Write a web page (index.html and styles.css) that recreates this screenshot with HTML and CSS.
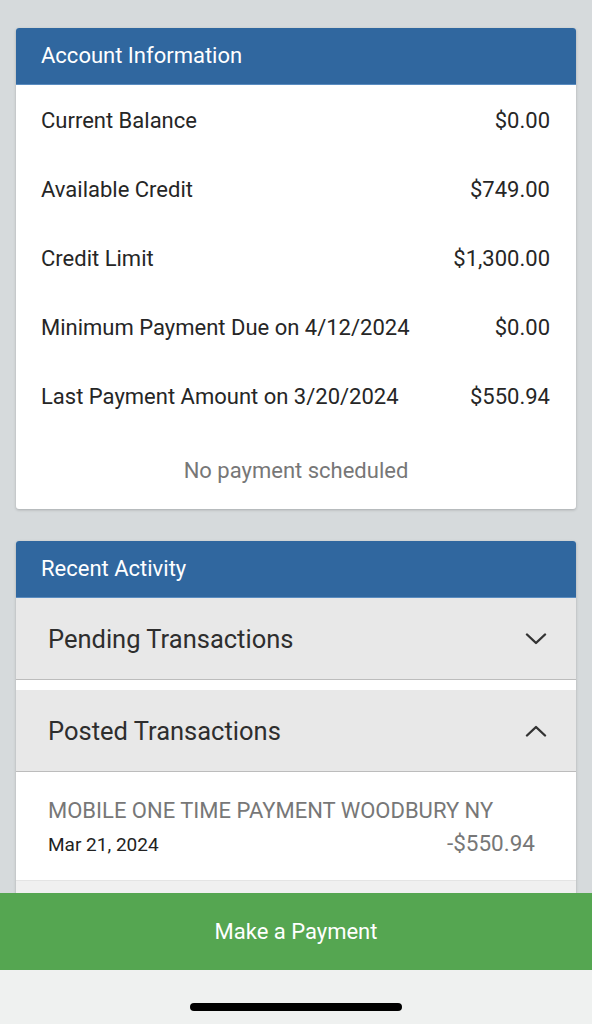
FILE: index.html
```html
<!DOCTYPE html>
<html lang="en">
<head>
<meta charset="utf-8">
<title>Account</title>
<link rel="stylesheet" href="styles.css">
</head>
<body>
<div class="screen">
  <main class="content">
    <section class="card">
      <header class="card-head">Account Information</header>
      <div class="info-row"><span>Current Balance</span><span>$0.00</span></div>
      <div class="info-row"><span>Available Credit</span><span>$749.00</span></div>
      <div class="info-row"><span>Credit Limit</span><span>$1,300.00</span></div>
      <div class="info-row"><span>Minimum Payment Due on 4/12/2024</span><span>$0.00</span></div>
      <div class="info-row"><span>Last Payment Amount on 3/20/2024</span><span>$550.94</span></div>
      <div class="note">No payment scheduled</div>
    </section>

    <section class="card">
      <header class="card-head">Recent Activity</header>
      <div class="acc-row">
        <span>Pending Transactions</span>
        <svg class="chev" width="22" height="12" viewBox="0 0 22 12"><path d="M2 1.5 L11 10 L20 1.5" fill="none" stroke="#333" stroke-width="2.4" stroke-linecap="round" stroke-linejoin="round"/></svg>
      </div>
      <div class="acc-gap"></div>
      <div class="acc-row">
        <span>Posted Transactions</span>
        <svg class="chev" width="22" height="12" viewBox="0 0 22 12"><path d="M2 10.5 L11 2 L20 10.5" fill="none" stroke="#333" stroke-width="2.4" stroke-linecap="round" stroke-linejoin="round"/></svg>
      </div>
      <div class="txn">
        <div class="txn-desc">MOBILE ONE TIME PAYMENT WOODBURY NY</div>
        <div class="txn-line"><span class="txn-date">Mar 21, 2024</span><span class="txn-amt">-$550.94</span></div>
      </div>
      <div class="txn-next"></div>
    </section>
  </main>
  <button class="pay-btn">Make a Payment</button>
  <div class="home-bar"><div class="home-ind"></div></div>
</div>
</body>
</html>
```

FILE: styles.css
```css
* { box-sizing: border-box; }
html, body { margin: 0; padding: 0; }
body {
  font-family: Roboto, "Noto Sans", sans-serif;
  background: #d6dadc;
  color: #2a2a2a;
}
.screen {
  width: 592px;
  height: 1024px;
  display: flex;
  flex-direction: column;
  overflow: hidden;
}
.content {
  height: 893px;
  flex-shrink: 0;
  overflow: hidden;
  padding: 28px 16px 0;
  display: flex;
  flex-direction: column;
  gap: 32px;
}
.card {
  flex-shrink: 0;
  background: #fff;
  border-radius: 3px;
  box-shadow: 0 1px 3px rgba(0,0,0,0.22);
  overflow: hidden;
}
.card-head {
  height: 57px;
  background: #30679f;
  color: #fff;
  font-size: 22px;
  display: flex;
  align-items: center;
  padding-left: 25px;
  padding-bottom: 1px;
  border-bottom: 1px solid #5a8cc0;
}
.info-row {
  height: 69px;
  display: flex;
  justify-content: space-between;
  align-items: center;
  padding: 0 26px 0 25px;
  font-size: 22px;
  color: #262626;
}
.info-row:first-of-type { margin-top: 1px; }
.note {
  height: 78px;
  display: flex;
  align-items: center;
  justify-content: center;
  font-size: 22px;
  color: #777;
}
.acc-row {
  height: 82px;
  background: #e8e8e8;
  border-bottom: 1px solid #bcbcbc;
  display: flex;
  align-items: center;
  justify-content: space-between;
  padding: 0 29px 0 32px;
  font-size: 25.5px;
  color: #2e2e2e;
}
.acc-gap { height: 10px; background: #fff; }
.chev { display: block; }
.txn {
  padding: 26px 41px 0 32px;
  height: 109px;
  border-bottom: 1px solid #e4e4e4;
}
.txn-desc {
  font-size: 22px;
  color: #777;
  line-height: 26px;
}
.txn-line {
  display: flex;
  justify-content: space-between;
  align-items: baseline;
  margin-top: 6px;
}
.txn-date { font-size: 19px; color: #222; }
.txn-amt { font-size: 22.5px; color: #777; }
.txn-next { height: 40px; background: #f0f0f0; }
.pay-btn {
  height: 77px;
  flex-shrink: 0;
  border: 0;
  background: #55a651;
  color: #fff;
  font-family: Roboto, "Noto Sans", sans-serif;
  font-size: 22px;
  padding: 0;
  width: 100%;
}
.home-bar {
  flex: 1;
  background: #eff1f0;
  display: flex;
  justify-content: center;
  padding-top: 33px;
}
.home-ind {
  width: 212px;
  height: 8px;
  border-radius: 4px;
  background: #000;
}
```
